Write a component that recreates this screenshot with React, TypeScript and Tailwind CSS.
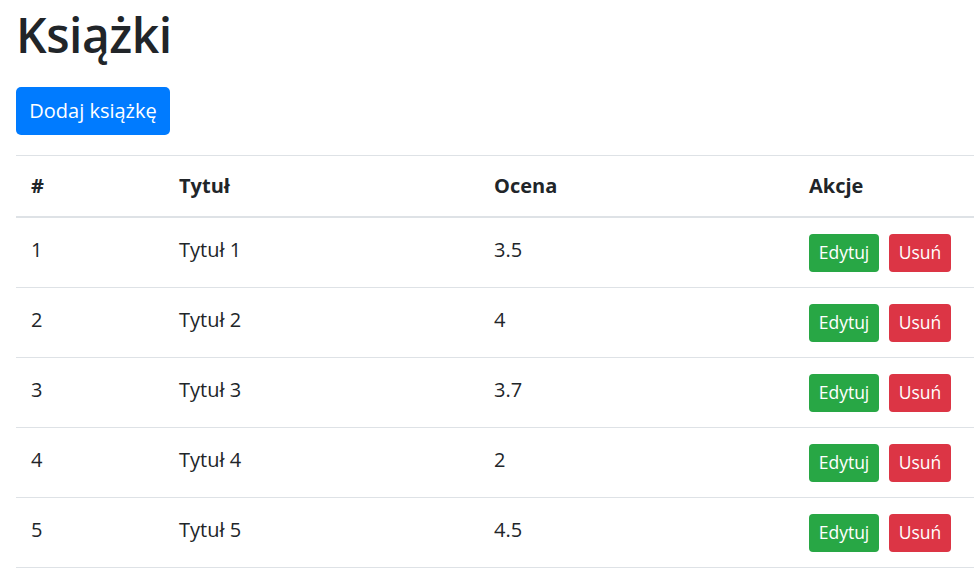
const books = [
  { id: 1, title: "Tytuł 1", rating: "3.5" },
  { id: 2, title: "Tytuł 2", rating: "4" },
  { id: 3, title: "Tytuł 3", rating: "3.7" },
  { id: 4, title: "Tytuł 4", rating: "2" },
  { id: 5, title: "Tytuł 5", rating: "4.5" },
];

export default function App() {
  return (
    <div
      className="min-h-screen bg-white pl-4 text-[#212529] overflow-hidden"
      style={{ fontFamily: '"Segoe UI", "Open Sans", "Noto Sans", sans-serif' }}
    >
      <h1 className="pt-[5px] h-[62px] text-[48px] leading-[60px] font-semibold tracking-[-0.5px]">Książki</h1>

      <button className="mt-[25px] w-[154px] h-[48px] rounded-[5px] bg-[#007bff] text-[20px] text-white">
        Dodaj książkę
      </button>

      {/* TABLE */}
      <div className="mt-[20px] w-[958px] text-[20px]">
        <div className="grid grid-cols-[148px_315px_315px_1fr] border-t border-b-2 border-[#dee2e6] h-[63px] items-center font-bold">
          <div className="px-[15px]">#</div>
          <div className="px-[15px]">Tytuł</div>
          <div className="px-[15px]">Ocena</div>
          <div className="px-[15px]">Akcje</div>
        </div>

        {books.map((book) => (
          <div
            key={book.id}
            className="grid grid-cols-[148px_315px_315px_1fr] border-b border-[#dee2e6] h-[70px] items-center"
          >
            <div className="px-[15px] pb-[6px]">{book.id}</div>
            <div className="px-[15px] pb-[6px]">{book.title}</div>
            <div className="px-[15px] pb-[6px]">{book.rating}</div>
            <div className="px-[15px] flex gap-[10px]">
              <button className="w-[70px] h-[38px] rounded-[4px] bg-[#28a745] text-[17.5px] text-white">
                Edytuj
              </button>
              <button className="w-[62px] h-[38px] rounded-[4px] bg-[#dc3545] text-[17.5px] text-white">
                Usuń
              </button>
            </div>
          </div>
        ))}
      </div>
    </div>
  );
}
